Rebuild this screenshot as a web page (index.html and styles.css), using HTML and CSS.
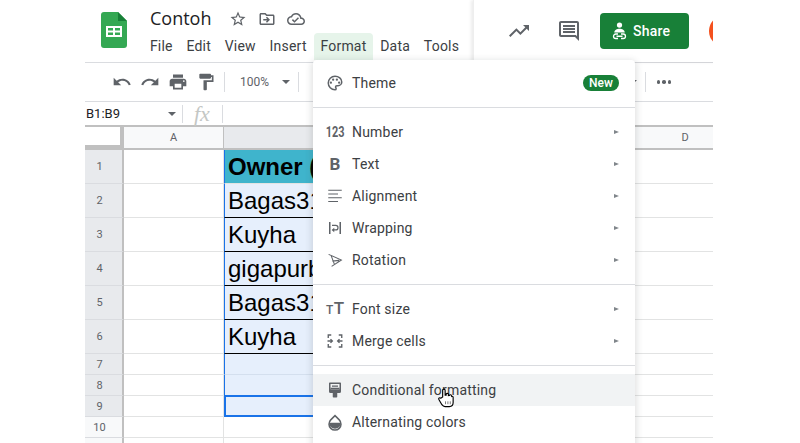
FILE: index.html
```html
<!DOCTYPE html>
<html lang="id">
<head>
  <meta charset="UTF-8" />
  <meta name="viewport" content="width=device-width, initial-scale=1.0"/>
  <title>Contoh - Google Sheets</title>
  <link rel="stylesheet" href="styles.css">
</head>
<body>
  <div class="app">

    <header class="top">
      <div class="doc">
        <svg class="logo" viewBox="0 0 26 36" width="26" height="36">
          <path fill="#34a853" d="M3 0h14l9 9v24a3 3 0 0 1-3 3H3a3 3 0 0 1-3-3V3a3 3 0 0 1 3-3z"/>
          <path fill="#188038" d="M17 0l9 9h-9z"/>
          <path fill="#fff" d="M5 14h16v11H5z"/>
          <path fill="#34a853" d="M7 16h5v2.500H7zM14 16h5v2.500h-5zM7 20.500h5V23H7zM14 20.500h5V23h-5z"/>
        </svg>
        <div class="doc-info">
          <div class="title-row">
            <span class="doc-title">Contoh</span>
            <svg class="title-icon" viewBox="0 0 24 24"><path d="M22 9.240l-7.190-.620L12 2 9.190 8.630 2 9.240l5.460 4.730L5.820 21 12 17.270 18.180 21l-1.630-7.030L22 9.240zM12 15.400l-3.760 2.270 1-4.280-3.320-2.880 4.380-.380L12 6.100l1.710 4.040 4.380.380-3.320 2.880 1 4.280L12 15.400z"/></svg>
            <svg class="title-icon" viewBox="0 0 24 24"><path d="M20 6h-8l-2-2H4c-1.100 0-2 .9-2 2v12c0 1.100.9 2 2 2h16c1.100 0 2-.9 2-2V8c0-1.100-.9-2-2-2zm0 12H4V6h5.170l2 2H20v10z"/><path d="M12.160 12H7v2h5.160l-1.590 1.590L11.990 17 16 13l-4.010-4-1.420 1.410z"/></svg>
            <svg class="title-icon" viewBox="0 0 24 24"><path d="M19.350 10.040C18.670 6.590 15.640 4 12 4 9.110 4 6.600 5.640 5.350 8.040 2.340 8.360 0 10.910 0 14c0 3.310 2.690 6 6 6h13c2.760 0 5-2.240 5-5 0-2.640-2.050-4.780-4.650-4.960zM19 18H6c-2.210 0-4-1.790-4-4 0-2.050 1.530-3.760 3.560-3.970l1.070-.11.500-.95C8.080 7.140 9.940 6 12 6c2.620 0 4.880 1.860 5.390 4.430l.3 1.500 1.530.11c1.560.1 2.780 1.410 2.780 2.960 0 1.650-1.350 3-3 3zm-9-3.820l-2.090-2.090L6.500 13.500 10 17l6.010-6.010-1.410-1.410z"/></svg>
          </div>
          <nav class="menubar">
            <span class="menubar-item">File</span>
            <span class="menubar-item">Edit</span>
            <span class="menubar-item">View</span>
            <span class="menubar-item">Insert</span>
            <span class="menubar-item active">Format</span>
            <span class="menubar-item">Data</span>
            <span class="menubar-item">Tools</span>
          </nav>
        </div>
      </div>
      <div class="actions">
        <svg class="action-icon" viewBox="0 0 24 24"><path d="M16 6l2.290 2.290-4.880 4.880-4-4L2 16.590 3.410 18l6-6 4 4 6.300-6.290L22 12V6z"/></svg>
        <svg class="action-icon" viewBox="0 0 24 24"><path d="M21.990 4c0-1.100-.89-2-1.990-2H4c-1.100 0-2 .9-2 2v12c0 1.100.9 2 2 2h14l4 4-.01-18zM20 4v13.170L18.830 16H4V4h16zM6 12h12v2H6zm0-3h12v2H6zm0-3h12v2H6z"/></svg>
        <button class="share">
          <svg viewBox="0 0 20 24" width="15" height="18">
            <circle cx="10" cy="4" r="3.500" fill="#fff"/>
            <path fill="#fff" d="M3 14c0-3 3.500-5 7-5s7 2 7 5z"/>
            <path fill="none" stroke="#fff" stroke-width="1.700" d="M8 16H5a3 3 0 0 0 0 6h3M12 16h3a3 3 0 0 1 0 6h-3M6 19h8"/>
          </svg>
          Share
        </button>
        <div class="avatar"></div>
      </div>
    </header>

    <div class="toolbar">
      <svg class="tool-icon" viewBox="0 0 24 24"><path d="M12.500 8c-2.650 0-5.050.99-6.900 2.600L2 7v9h9l-3.620-3.620c1.390-1.160 3.160-1.880 5.120-1.880 3.540 0 6.550 2.310 7.600 5.500l2.370-.78C21.080 11.030 17.150 8 12.500 8z"/></svg>
      <svg class="tool-icon" viewBox="0 0 24 24"><path d="M18.400 10.600C16.550 8.990 14.150 8 11.500 8c-4.650 0-8.580 3.030-9.960 7.220L3.900 16c1.050-3.190 4.050-5.500 7.600-5.500 1.950 0 3.730.72 5.120 1.880L13 16h9V7l-3.600 3.600z"/></svg>
      <svg class="tool-icon" viewBox="0 0 24 24"><path d="M19 8H5c-1.660 0-3 1.340-3 3v6h4v4h12v-4h4v-6c0-1.660-1.340-3-3-3zm-3 11H8v-5h8v5zm3-7c-.55 0-1-.45-1-1s.45-1 1-1 1 .45 1 1-.45 1-1 1zm-1-9H6v4h12V3z"/></svg>
      <svg class="tool-icon" viewBox="0 0 24 24"><path d="M18 4V3c0-.55-.45-1-1-1H5c-.55 0-1 .45-1 1v4c0 .55.45 1 1 1h12c.55 0 1-.45 1-1V6h1v4H9v11c0 .55.45 1 1 1h2c.55 0 1-.45 1-1v-9h8V4h-3z"/></svg>
      <span class="tool-sep"></span>
      <span class="zoom-value">100%</span>
      <span class="caret"></span>
      <span class="tool-sep zoom-sep"></span>
      <span class="tool-right">
        <span class="caret"></span>
        <span class="tool-sep"></span>
        <span class="more"><i></i><i></i><i></i></span>
      </span>
    </div>

    <div class="formula">
      <span class="range">B1:B9</span>
      <span class="caret"></span>
      <span class="tool-sep"></span>
      <span class="fx">fx</span>
      <span class="tool-sep"></span>
    </div>

    <div class="sheet">
      <div class="col-heads">
        <div class="corner"></div>
        <div class="col-head">A</div>
        <div class="col-head selected"></div>
        <div class="col-head plain"></div>
        <div class="col-head plain">D</div>
      </div>
      <div class="row tall"><div class="row-head">1</div><div class="cell"></div><div class="cell sel owner">Owner (</div><div class="cell"></div></div>
      <div class="row tall"><div class="row-head">2</div><div class="cell"></div><div class="cell sel data">Bagas31</div><div class="cell"></div></div>
      <div class="row tall"><div class="row-head">3</div><div class="cell"></div><div class="cell sel data">Kuyha</div><div class="cell"></div></div>
      <div class="row tall"><div class="row-head">4</div><div class="cell"></div><div class="cell sel data">gigapurb</div><div class="cell"></div></div>
      <div class="row tall"><div class="row-head">5</div><div class="cell"></div><div class="cell sel data">Bagas31</div><div class="cell"></div></div>
      <div class="row tall"><div class="row-head">6</div><div class="cell"></div><div class="cell sel data">Kuyha</div><div class="cell"></div></div>
      <div class="row"><div class="row-head">7</div><div class="cell"></div><div class="cell sel"></div><div class="cell"></div></div>
      <div class="row"><div class="row-head">8</div><div class="cell"></div><div class="cell sel"></div><div class="cell"></div></div>
      <div class="row"><div class="row-head">9</div><div class="cell"></div><div class="cell sel current"></div><div class="cell"></div></div>
      <div class="row"><div class="row-head plain">10</div><div class="cell"></div><div class="cell"></div><div class="cell"></div></div>
      <div class="row"><div class="row-head plain"></div><div class="cell"></div><div class="cell"></div><div class="cell"></div></div>
    </div>

    <div class="menu">
      <div class="menu-item">
        <svg class="menu-icon" viewBox="0 0 24 24"><path fill="none" stroke="#5f6368" stroke-width="2" d="M12 3c-5 0-9 4-9 9s4 9 9 9c.9 0 1.500-.7 1.500-1.500 0-1-.8-1.300-.8-2.300 0-.9.8-1.700 1.800-1.700H16c2.800 0 5-2.200 5-5 0-4.200-4-7.500-9-7.500z"/><circle cx="6.500" cy="11.500" r="1.500"/><circle cx="9.500" cy="7.500" r="1.500"/><circle cx="14.500" cy="7.500" r="1.500"/><circle cx="17.500" cy="11.500" r="1.500"/></svg>
        <span class="menu-label">Theme</span>
        <span class="badge">New</span>
      </div>
      <div class="menu-sep"></div>
      <div class="menu-item">
        <span class="menu-glyph digits">123</span>
        <span class="menu-label">Number</span>
        <span class="arrow"></span>
      </div>
      <div class="menu-item">
        <span class="menu-glyph bold">B</span>
        <span class="menu-label">Text</span>
        <span class="arrow"></span>
      </div>
      <div class="menu-item">
        <svg class="menu-icon" viewBox="0 0 24 24"><path d="M3 3.500h18v1.500H3zM3 8.500h13v1.500H3zM3 13.500h18v1.500H3zM3 18.500h13v1.500H3z"/></svg>
        <span class="menu-label">Alignment</span>
        <span class="arrow"></span>
      </div>
      <div class="menu-item">
        <svg class="menu-icon" viewBox="0 0 24 24"><path d="M4 4h2v16H4zM18 4h2v16h-2z"/><path fill="none" stroke="#5f6368" stroke-width="1.600" d="M8 8.500h5a2.500 2.500 0 0 1 0 6H9"/><path d="M11 11.500v6L7.500 14.500z"/></svg>
        <span class="menu-label">Wrapping</span>
        <span class="arrow"></span>
      </div>
      <div class="menu-item">
        <svg class="menu-icon" viewBox="0 0 24 24"><path fill="none" stroke="#5f6368" stroke-width="1.400" d="M3.500 4.500l17 7.500-13 8.500M7 6.500l4.500 12M8.500 13.500l9-1"/></svg>
        <span class="menu-label">Rotation</span>
        <span class="arrow"></span>
      </div>
      <div class="menu-sep"></div>
      <div class="menu-item">
        <span class="menu-glyph size"><small>T</small>T</span>
        <span class="menu-label">Font size</span>
        <span class="arrow"></span>
      </div>
      <div class="menu-item">
        <svg class="menu-icon" viewBox="0 0 24 24"><path fill="none" stroke="#5f6368" stroke-width="1.800" d="M3 8V4h4M21 8V4h-4M3 16v4h4M21 16v4h-4M2 12h6M22 12h-6M6 9.500L8.500 12 6 14.500M18 9.500L15.500 12l2.500 2.500"/></svg>
        <span class="menu-label">Merge cells</span>
        <span class="arrow"></span>
      </div>
      <div class="menu-sep"></div>
      <div class="menu-item hover">
        <svg class="menu-icon" viewBox="0 0 24 24"><path d="M5 2h14a1 1 0 0 1 1 1v11a2 2 0 0 1-2 2h-3v5a1 1 0 0 1-1 1h-4a1 1 0 0 1-1-1v-5H6a2 2 0 0 1-2-2V3a1 1 0 0 1 1-1z"/><path fill="#f1f3f4" d="M6 4h12v7H6z"/><path d="M8 6h8v1.500H8zM6 9h12v1.500H6z"/></svg>
        <span class="menu-label">Conditional formatting</span>
      </div>
      <div class="menu-item">
        <svg class="menu-icon" viewBox="0 0 24 24"><path fill="none" stroke="#5f6368" stroke-width="2" d="M12 3.500l5.700 5.700a8 8 0 1 1-11.400 0z"/><path d="M4 13h16a8 8 0 0 1-16 0z"/></svg>
        <span class="menu-label">Alternating colors</span>
      </div>
      <svg class="hand" viewBox="0 0 18 21" width="18" height="20">
        <path fill="#fff" stroke="#000" stroke-width="1.200" d="M5.500 9.500V2.500a1.300 1.300 0 0 1 2.600 0v5l1 .1v-.9a1.200 1.200 0 0 1 2.400.2v1l1-.1a1.200 1.200 0 0 1 2.300.4l.2.600c.6-.3 1.500.1 1.500 1v5.500c0 2.500-1.500 4.200-4 4.200H8c-1.500 0-2.500-.8-3.300-2L1.500 12c-.7-1.100.8-2.400 2-1.300z"/>
        <path fill="none" stroke="#555" stroke-width=".8" d="M8.500 14v3M11 14v3M13.500 14v3"/>
      </svg>
    </div>

  </div>
</body>
</html>
```

FILE: styles.css
```css
* {
  box-sizing: border-box;
}

body {
  margin: 0;
  overflow: hidden;
  background-color: white;
  font-family: Roboto, sans-serif;
  color: #3c4043;
}

.app {
  position: relative;
  width: 628px;
  height: 443px;
  margin-left: 85px;
  overflow: hidden;
}

/* top bar */
.top {
  display: flex;
  height: 63px;
  border-bottom: 1px solid #dadce0;
}

.doc {
  display: flex;
  flex: none;
  width: 388px;
  padding: 12px 0 0 16px;
}

.logo {
  flex: none;
}

.doc-info {
  margin-left: 23px;
}

.title-row {
  display: flex;
  align-items: center;
  height: 22px;
  margin-top: -4px;
}

.doc-title {
  width: 79px;
  margin-top: -2px;
  font-family: "Open Sans", sans-serif;
  font-size: 18px;
  color: #202124;
}

.title-icon {
  width: 18px;
  height: 18px;
  margin-right: 11px;
  fill: #5f6368;
}

.menubar {
  display: flex;
  margin-top: 3px;
  margin-left: -7px;
}

.menubar-item {
  height: 27px;
  padding: 0 6.9px;
  font-size: 14px;
  letter-spacing: 0.2px;
  line-height: 27px;
  color: #3c4043;
}

.menubar-item.active {
  background-color: #e6f4ea;
  border-radius: 4px 4px 0 0;
}

.actions {
  display: flex;
  flex: 1;
  align-items: center;
  height: 62px;
  padding-left: 33px;
  border-left: 1px solid #eee;
  box-shadow: -2px 0 3px rgba(0,0,0,0.08);
}

.action-icon {
  flex: none;
  width: 24px;
  height: 24px;
  margin-right: 26px;
  fill: #5f6368;
}

.share {
  display: flex;
  flex: none;
  align-items: center;
  gap: 6px;
  width: 89px;
  height: 36px;
  margin-left: -7px;
  padding: 0 0 0 12px;
  background-color: #188038;
  color: white;
  border: none;
  border-radius: 4px;
  font-family: Roboto, sans-serif;
  font-size: 14px;
  font-weight: 500;
  letter-spacing: 0.25px;
}

.avatar {
  flex: none;
  width: 32px;
  height: 32px;
  margin-left: 20px;
  background-color: #f4511e;
  border-radius: 50%;
}

/* toolbar */
.toolbar {
  display: flex;
  align-items: center;
  height: 39px;
  padding-left: 27px;
  border-bottom: 1px solid #dadce0;
}

.tool-icon {
  flex: none;
  width: 20px;
  height: 20px;
  margin-right: 8px;
  fill: #5f6368;
}

.tool-sep {
  flex: none;
  width: 1px;
  height: 20px;
  background-color: #dadce0;
}

.zoom-value {
  margin-left: 15px;
  font-size: 12px;
  color: #5f6368;
}

.caret {
  flex: none;
  width: 0;
  height: 0;
  border-left: 4px solid transparent;
  border-right: 4px solid transparent;
  border-top: 4px solid #5f6368;
}

.zoom-value + .caret {
  margin-left: 13px;
}

.zoom-sep {
  margin-left: 8px;
}

.tool-right {
  display: flex;
  align-items: center;
  margin-left: auto;
  padding-right: 42px;
}

.tool-right .tool-sep {
  margin: 0 11px 0 8px;
}

.more {
  display: flex;
  gap: 2px;
}

.more i {
  width: 3.500px;
  height: 3.500px;
  background-color: #5f6368;
  border-radius: 50%;
}

/* formula bar */
.formula {
  display: flex;
  align-items: center;
  height: 23px;
  padding-left: 1px;
}

.range {
  width: 82px;
  font-size: 13px;
  color: #202124;
}

.formula .tool-sep {
  height: 18px;
  margin-left: 6px;
}

.fx {
  width: 22px;
  margin-left: 11px;
  font-family: "Liberation Serif", serif;
  font-size: 22px;
  font-style: italic;
  line-height: 23px;
  color: #c4c7c5;
}

/* grid */
.sheet {
  border-top: 2px solid #c0c0c0;
}

.col-heads {
  display: grid;
  grid-template-columns: 39px 100px 180px 181px 200px;
  height: 23px;
  border-bottom: 2px solid #c0c0c0;
  background-color: #f8f9fa;
  font-size: 11px;
  color: #5f6368;
}

.corner {
  margin-bottom: -1px;
  background-color: white;
  border-right: 4px solid #c0c0c0;
  border-bottom: 4px solid #c0c0c0;
}

.col-head {
  display: flex;
  align-items: center;
  justify-content: center;
  border-right: 1px solid #c0c0c0;
}

.col-head.selected {
  background-color: #e8eaed;
}

.col-head.plain {
  border-right: none;
}

.row {
  display: grid;
  grid-template-columns: 39px 100px 180px 1fr;
  height: 21px;
}

.row.tall {
  height: 34px;
}

.row-head {
  display: flex;
  align-items: center;
  justify-content: center;
  padding-right: 8px;
  background-color: #e8eaed;
  border-right: 2px solid #c0c0c0;
  border-bottom: 1px solid #dadce0;
  font-size: 11px;
  color: #5f6368;
}

.row-head.plain {
  background-color: #f8f9fa;
}

.cell {
  padding-left: 3px;
  border-bottom: 1px solid #e2e3e3;
  border-right: 1px solid #e2e3e3;
  font-family: "Liberation Sans", sans-serif;
  font-size: 24px;
  line-height: 33px;
  color: black;
  white-space: nowrap;
  overflow: hidden;
}

.cell:last-child {
  border-right: none;
}

.cell.sel {
  background-color: #e6effc;
  border-left: 1px solid #1a73e8;
  border-bottom-color: #d4dfee;
}

.cell.owner {
  background-color: #3fb4cc;
  font-weight: bold;
  border-bottom-color: #e2e3e3;
}

.cell.data {
  border-bottom-color: black;
}

.cell.current {
  height: 22px;
  margin-top: -1px;
  border: 2px solid #1a73e8;
}

/* format menu */
.menu {
  position: absolute;
  top: 60px;
  left: 228px;
  width: 322px;
  height: 400px;
  padding-top: 7px;
  background-color: white;
  box-shadow: 0 2px 6px 2px rgba(60,64,67,0.15);
  border-radius: 4px 4px 0 0;
}

.menu-item {
  display: flex;
  align-items: center;
  height: 32px;
  padding: 0 16px 0 13px;
  font-size: 14px;
  color: #3c4043;
}

.menu-item.hover {
  background-color: #f1f3f4;
}

.menu-icon {
  flex: none;
  width: 18px;
  height: 18px;
  fill: #5f6368;
}

.menu-glyph {
  flex: none;
  width: 18px;
  font-weight: 700;
  color: #5f6368;
  text-align: center;
}

.menu-glyph.digits {
  width: 24px;
  margin: 0 -3px;
  font-size: 14px;
  white-space: nowrap;
  transform: scaleX(0.78);
}

.menu-glyph.bold {
  font-size: 17px;
}

.menu-glyph.size {
  font-size: 17px;
  font-weight: 500;
  line-height: 18px;
  letter-spacing: 0.5px;
}

.menu-glyph.size small {
  font-size: 12px;
}

.menu-label {
  margin-left: 8px;
  letter-spacing: 0.2px;
  white-space: nowrap;
}

.badge {
  width: 36px;
  height: 16px;
  margin-left: auto;
  background-color: #188038;
  color: white;
  border-radius: 8px;
  font-size: 12px;
  font-weight: 500;
  line-height: 16px;
  text-align: center;
}

.arrow {
  margin-left: auto;
  border-left: 5px solid #80868b;
  border-top: 2.500px solid transparent;
  border-bottom: 2.500px solid transparent;
}

.menu-sep {
  height: 1px;
  margin: 8px 0;
  background-color: #dadce0;
}

.hand {
  position: absolute;
  top: 328px;
  left: 124px;
}
```
